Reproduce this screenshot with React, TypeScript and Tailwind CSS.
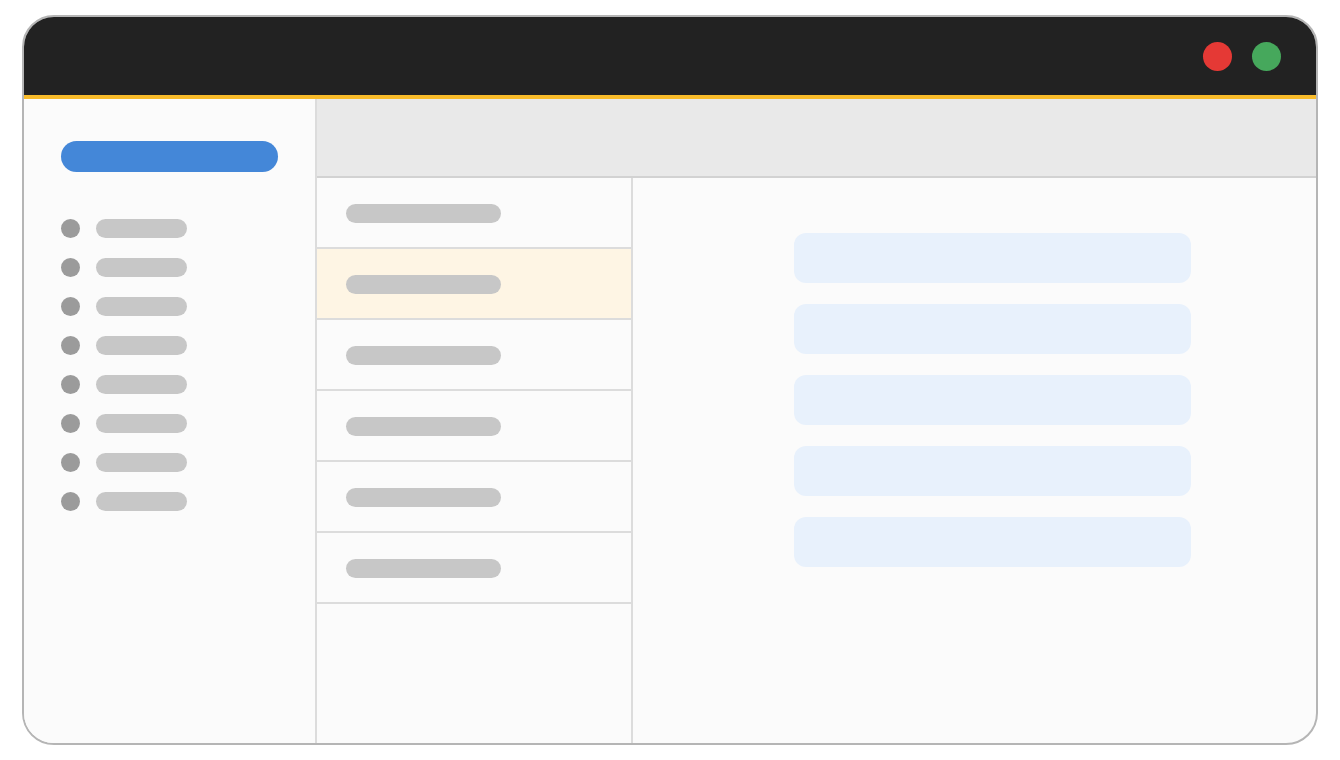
const navItems = Array.from({ length: 8 }, (_, i) => i)
const listRows = Array.from({ length: 6 }, (_, i) => i)
const cards = Array.from({ length: 5 }, (_, i) => i)

function Sidebar() {
    return (
        <aside className="w-[293px] shrink-0 border-r-2 border-[#dcdcdc] bg-[#fbfbfb] pl-[37px] pt-[42px]">
            <div className="h-[31px] w-[217px] rounded-full bg-[#4487d8]" />
            <ul className="mt-[47px] flex flex-col gap-[20px]">
                {navItems.map((i) => (
                    <li key={i} className="flex items-center gap-[16px]">
                        <span className="h-[19px] w-[19px] rounded-full bg-[#9b9b9b]" />
                        <span className="h-[19px] w-[91px] rounded-full bg-[#c7c7c7]" />
                    </li>
                ))}
            </ul>
        </aside>
    )
}

function MessageList() {
    return (
        <div className="w-[316px] shrink-0 border-r-2 border-[#dcdcdc]">
            {listRows.map((i) => (
                <div
                    key={i}
                    className={`flex h-[71px] items-center border-b-2 border-[#dcdcdc] pl-[29px] pt-[2px] ${i === 1 ? "bg-[#fef5e4]" : ""}`}
                >
                    <span className="h-[19px] w-[155px] rounded-full bg-[#c7c7c7]" />
                </div>
            ))}
        </div>
    )
}

function Detail() {
    return (
        <div className="flex flex-1 flex-col gap-[21px] pl-[161px] pt-[55px]">
            {cards.map((i) => (
                <div key={i} className="h-[50px] w-[397px] rounded-[12px] bg-[#e8f1fc]" />
            ))}
        </div>
    )
}

export default function App() {
    return (
        <div className="h-[760px] w-[1340px] bg-white pl-[22px] pt-[15px]">
            <div className="flex h-[730px] w-[1296px] flex-col overflow-hidden rounded-[32px] border-2 border-[#b5b5b5] bg-[#fbfbfb]">
                <header className="flex h-[82px] shrink-0 items-center justify-end gap-[20px] border-b-4 border-[#f8bb2a] bg-[#222222] pr-[35px]">
                    <span className="h-[29px] w-[29px] rounded-full bg-[#e53935]" />
                    <span className="h-[29px] w-[29px] rounded-full bg-[#46a85c]" />
                </header>
                <div className="flex flex-1">
                    <Sidebar />
                    <main className="flex flex-1 flex-col">
                        <div className="h-[79px] shrink-0 border-b-2 border-[#d2d2d2] bg-[#e9e9e9]" />
                        <div className="flex flex-1">
                            <MessageList />
                            <Detail />
                        </div>
                    </main>
                </div>
            </div>
        </div>
    )
}
